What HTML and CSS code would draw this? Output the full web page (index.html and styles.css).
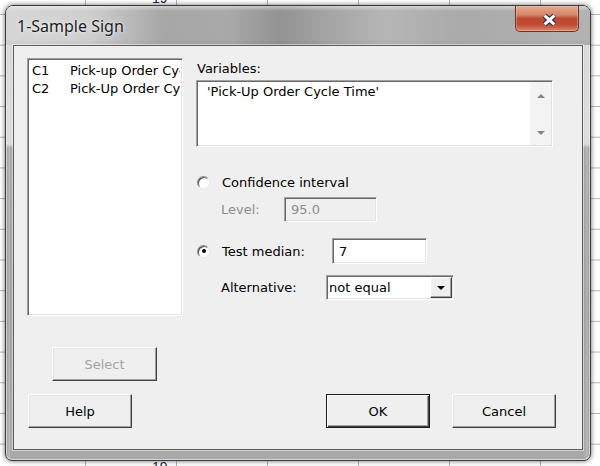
FILE: index.html
```html
<!DOCTYPE html>
<html lang="en">
<head>
  <meta charset="UTF-8">
  <title>1-Sample Sign</title>
  <link rel="stylesheet" href="styles.css">
</head>
<body>
  <span class="sheet-num num-top">19</span>
  <span class="sheet-num num-bottom">19</span>

  <div class="dialog">
    <div class="titlebar">
      <span class="title">1-Sample Sign</span>
      <button class="close" title="Close">
        <svg width="64" height="26" viewBox="0 0 64 26">
          <path d="M29.5 9.5 L39.5 18.5 M39.5 9.5 L29.5 18.5" stroke="#2c3152" stroke-width="5.5" fill="none"/>
          <path d="M29.5 9.5 L39.5 18.5 M39.5 9.5 L29.5 18.5" stroke="#fff" stroke-width="3" fill="none"/>
        </svg>
      </button>
    </div>

    <div class="client">
      <div class="top">
        <!-- lista de columnas -->
        <div class="left-col">
          <div class="listbox sunken">
            <div class="item"><span class="col-id">C1</span><span class="col-name">Pick-up Order Cycle Time</span></div>
            <div class="item"><span class="col-id">C2</span><span class="col-name">Pick-Up Order Cycle Time</span></div>
          </div>
          <button class="btn btn-select" disabled>Select</button>
        </div>

        <!-- opciones -->
        <div class="right-col">
          <div class="var-label">Variables:</div>
          <div class="varbox sunken">
            <div class="var-text">'Pick-Up Order Cycle Time'</div>
            <div class="scrollbar">
              <span class="arrow up"></span>
              <span class="arrow down"></span>
            </div>
          </div>

          <div class="row row-ci">
            <span class="radio"></span>
            <span>Confidence interval</span>
          </div>
          <div class="row row-level">
            <span class="sub-label level-label">Level:</span>
            <div class="field sunken field-disabled">95.0</div>
          </div>
          <div class="row row-median">
            <span class="radio checked"></span>
            <span class="median-label">Test median:</span>
            <div class="field sunken field-median">7</div>
          </div>
          <div class="row row-alt">
            <span class="sub-label alt-label">Alternative:</span>
            <div class="combo sunken">
              <span class="combo-text">not equal</span>
              <span class="combo-btn"><span class="arrow down dark"></span></span>
            </div>
          </div>
        </div>
      </div>

      <div class="bottom">
        <button class="btn">Help</button>
        <div class="actions">
          <button class="btn btn-default">OK</button>
          <button class="btn">Cancel</button>
        </div>
      </div>
    </div>
  </div>
</body>
</html>
```

FILE: styles.css
```css
/* hoja de fondo + ventana */
body {
  margin: 0;
  width: 600px;
  height: 466px;
  overflow: hidden;
  position: relative;
  font-family: "DejaVu Sans", Verdana, sans-serif;
  font-size: 13px;
  color: #000;
  background-color: #fff;
  background-image:
    linear-gradient(90deg, #b4b4b4 1px, transparent 1px),
    linear-gradient(#b4b4b4 1px, transparent 1px);
  background-size: 91px 100%, 100% 30.7px;
  background-position: 85px 0, 0 14px;
}
button {
  font: inherit;
  color: inherit;
  padding: 0;
  margin: 0;
}
.sheet-num {
  position: absolute;
  left: 152px;
  font-family: "Liberation Sans", Arial, sans-serif;
  font-size: 14px;
  color: #23264a;
}
.num-top {
  top: -10px;
}
.num-bottom {
  top: 459px;
}

.dialog {
  position: absolute;
  left: 5px;
  top: 5px;
  width: 586px;
  height: 456px;
  box-sizing: border-box;
  border: 1px solid #3a3a3a;
  border-radius: 8px 8px 7px 7px;
  padding: 0 7px 10px;
  display: flex;
  flex-direction: column;
  background:
    linear-gradient(90deg, transparent 2px, rgba(255,255,255,.25) 3px, transparent 5px, transparent calc(100% - 5px), rgba(255,255,255,.25) calc(100% - 3px), transparent calc(100% - 2px)),
    linear-gradient(#d4d4d4 0, #d9d9d9 138px, #a7a7a7 142px, #a0a0a0 300px, #a9a9a9 100%);
  box-shadow: 0 0 5px rgba(0,0,0,.6), inset 0 0 0 1px rgba(255,255,255,.55);
}
.titlebar {
  height: 39px;
  margin: 0 -7px;
  padding-left: 11px;
  display: flex;
  align-items: center;
  border-radius: 7px 7px 0 0;
  background:
    linear-gradient(rgba(255,255,255,.45) 0, rgba(255,255,255,0) 5px, rgba(255,255,255,0) 33px, rgba(0,0,0,.05) 39px),
    linear-gradient(90deg, #d6d6d6 0, #cfcfcf 14%, #a7a7a7 27%, #a9a9a9 38%, #939393 47%, #a4a4a4 55%, #b6b6b6 65%, #aaaaaa 78%, #b3b3b3 100%);
}
.title {
  font-family: "Noto Sans", "Open Sans", sans-serif;
  font-size: 16px;
  color: #1c1c1c;
  text-shadow: 0 0 6px rgba(255,255,255,.9), 0 0 2px rgba(255,255,255,.7);
}
.close {
  margin-left: auto;
  margin-right: 11px;
  align-self: flex-start;
  width: 64px;
  height: 26px;
  border: 1px solid #6d3526;
  border-top: none;
  border-radius: 0 0 5px 5px;
  background: linear-gradient(#e4a98f 0, #d68769 35%, #bd4a31 50%, #bf4d33 75%, #d9896b 100%);
  box-shadow: inset 0 0 0 1px rgba(255,220,200,.35);
  display: flex;
  align-items: center;
  justify-content: center;
}
.close svg {
  display: block;
}

.client {
  flex: 1;
  background: #efefef;
  border: 1px solid #5c5c5c;
  box-shadow: 0 0 0 1px rgba(255,255,255,.5);
  padding: 12px 0 0 13px;
}
.top {
  display: flex;
  gap: 13px;
}

/* bordes 3D */
.sunken {
  box-sizing: border-box;
  border: 1px solid;
  border-color: #a0a0a0 #fff #fff #a0a0a0;
  box-shadow: inset 1px 1px #696969, inset -1px -1px #e3e3e3;
  background: #fff;
}
.btn {
  box-sizing: border-box;
  width: 104px;
  height: 34px;
  background: #efefef;
  border: 1px solid;
  border-color: #fff #404040 #404040 #fff;
  box-shadow: inset -1px -1px #a0a0a0, inset 1px 1px #e6e6e6;
}
.btn-default {
  border-color: #1a1a1a;
  box-shadow: inset 1px 1px #fff, inset -1px -1px #404040, inset -2px -2px #a0a0a0;
}
.btn-select {
  width: 105px;
  margin: 31px 0 0 25px;
  color: #a3a3a3;
}

.left-col {
  width: 156px;
  display: flex;
  flex-direction: column;
}
.listbox {
  height: 258px;
  padding: 3px 2px 0 4px;
  overflow: hidden;
  white-space: nowrap;
}
.item {
  display: flex;
  height: 18px;
  line-height: 18px;
}
.col-id {
  width: 38px;
  flex: none;
}
.col-name {
  flex: 1;
  min-width: 0;
  overflow: hidden;
}

.right-col {
  width: 357px;
}
.var-label {
  line-height: 18px;
  padding-top: 2px;
  margin-bottom: 2px;
  padding-left: 1px;
}
.varbox {
  height: 67px;
  display: flex;
}
.var-text {
  padding: 2px 0 0 10px;
  line-height: 18px;
}
.scrollbar {
  margin: 1px 1px 1px auto;
  width: 21px;
  background: #f3f3f3;
  display: flex;
  flex-direction: column;
  align-items: center;
  justify-content: space-between;
  padding: 12px 0 10px;
  box-sizing: border-box;
}
.arrow {
  width: 0;
  height: 0;
  border-left: 4.5px solid transparent;
  border-right: 4.5px solid transparent;
}
.arrow.up {
  border-bottom: 4px solid #858585;
}
.arrow.down {
  border-top: 4px solid #858585;
}
.arrow.dark {
  border-top-color: #000;
  border-left-width: 4px;
  border-right-width: 4px;
}

.row {
  display: flex;
  align-items: center;
}
.radio {
  width: 13px;
  height: 13px;
  box-sizing: border-box;
  border-radius: 50%;
  border: 1px solid;
  border-color: #8a8a8a #e9e9e9 #e9e9e9 #8a8a8a;
  box-shadow: inset 1px 1px #4a4a4a;
  background: #fff;
  margin-right: 12px;
  display: flex;
  align-items: center;
  justify-content: center;
  flex: none;
}
.radio.checked::after {
  content: "";
  width: 4px;
  height: 4px;
  border-radius: 50%;
  background: #000;
}
.row-ci {
  height: 20px;
  margin-top: 25px;
  padding-left: 1px;
}
.row-level {
  height: 25px;
  margin-top: 5px;
  padding-left: 25px;
}
.sub-label {
  flex: none;
}
.level-label {
  width: 63px;
  color: #8d8d8d;
}
.field {
  height: 100%;
  line-height: 23px;
  padding-left: 6px;
}
.field-disabled {
  width: 93px;
  background: #efefef;
  color: #8d8d8d;
}
.row-median {
  height: 26px;
  margin-top: 16px;
  padding-left: 1px;
}
.median-label {
  width: 110px;
}
.field-median {
  width: 95px;
  line-height: 25px;
}
.row-alt {
  height: 25px;
  margin-top: 11px;
  padding-left: 25px;
}
.alt-label {
  width: 105px;
}
.combo {
  width: 128px;
  height: 100%;
  display: flex;
  align-items: center;
}
.combo-text {
  padding-left: 2px;
}
.combo-btn {
  margin: 1px 1px 1px auto;
  align-self: stretch;
  width: 22px;
  box-sizing: border-box;
  background: #efefef;
  border: 1px solid;
  border-color: #fff #404040 #404040 #fff;
  box-shadow: inset -1px -1px #a0a0a0;
  display: flex;
  align-items: center;
  justify-content: center;
}

.bottom {
  display: flex;
  justify-content: space-between;
  margin: 13px 0 0 1px;
  padding-right: 26px;
}
.actions {
  display: flex;
  gap: 22px;
}
```
